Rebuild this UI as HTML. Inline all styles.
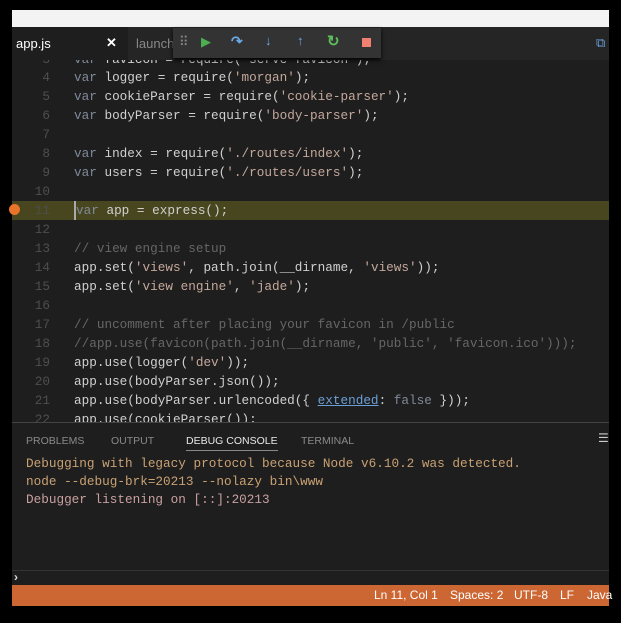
<!DOCTYPE html>
<html><head><style>
body{margin:0;width:621px;height:623px;background:#000;position:relative;overflow:hidden;font-family:"Liberation Sans",sans-serif}
.top{position:absolute;left:12px;top:10px;width:597px;height:17px;background:#f3f3f3}
.tabs{position:absolute;left:12px;top:27px;width:597px;height:33px;background:#252526}
.tab1{position:absolute;left:0;top:0;width:116px;height:33px;background:#1e1e1e;color:#fff;font-size:13px}
.ed{position:absolute;left:12px;top:60px;width:597px;height:362px;background:#1e1e1e;overflow:hidden}
.ln{position:absolute;left:0;width:597px;height:19px;font-family:"Liberation Mono",monospace;font-size:12.7px;line-height:19px;color:#d0d0d0;white-space:pre}
.ln .n{position:absolute;left:14px;width:24px;text-align:right;color:#4e4e4e}
.ln .c{position:absolute;left:62px}
.k{color:#7f8a99}.s{color:#c4a89c}.cm{color:#666}.lk{color:#6a9fd8;text-decoration:underline}
.hl{background:#48461f}
.dbg{position:absolute;left:173px;top:28px;width:208px;height:30px;background:#333333;box-shadow:0 2px 4px #000}
.panel{position:absolute;left:12px;top:422px;width:597px;height:148px;background:#1e1e1e;border-top:1px solid #444}
.pt{position:absolute;top:12px;font-size:10.5px;color:#8a8a8a}
.out{position:absolute;left:14px;font-family:"Liberation Mono",monospace;font-size:12.7px;line-height:18px;color:#c9a173;white-space:pre}
.inp{position:absolute;left:12px;top:570px;width:597px;height:15px;background:#1e1e1e;border-top:1px solid #333;color:#ddd;font-size:12px}
.sb{position:absolute;left:12px;top:585px;width:597px;height:21px;background:#cc6633;color:#fff;font-size:12px;line-height:21px}
</style></head><body>
<div class="top"></div>
<div class="tabs">
 <div class="tab1"><span style="position:absolute;left:4px;top:9px">app.js</span><span style="position:absolute;left:94px;top:8px;font-weight:bold">✕</span></div>
 <span style="position:absolute;left:124px;top:9px;color:#888;font-size:13px">launch</span>
 <span style="position:absolute;left:584px;top:8px;color:#6a9fd8;font-size:13px">⧉</span>
</div>
<div class="ed">
 <div class="ln" style="top:-10px"><span class="n">3</span><span class="c"><span class="k">var</span> favicon = require('serve-favicon');</span></div>
 <div class="ln" style="top:8px"><span class="n">4</span><span class="c"><span class="k">var</span> logger = require(<span class="s">'morgan'</span>);</span></div>
 <div class="ln" style="top:27px"><span class="n">5</span><span class="c"><span class="k">var</span> cookieParser = require(<span class="s">'cookie-parser'</span>);</span></div>
 <div class="ln" style="top:46px"><span class="n">6</span><span class="c"><span class="k">var</span> bodyParser = require(<span class="s">'body-parser'</span>);</span></div>
 <div class="ln" style="top:65px"><span class="n">7</span></div>
 <div class="ln" style="top:84px"><span class="n">8</span><span class="c"><span class="k">var</span> index = require(<span class="s">'./routes/index'</span>);</span></div>
 <div class="ln" style="top:103px"><span class="n">9</span><span class="c"><span class="k">var</span> users = require(<span class="s">'./routes/users'</span>);</span></div>
 <div class="ln" style="top:122px"><span class="n">10</span></div>
 <div class="ln hl" style="top:141px"><span class="n">11</span><span class="c" style="border-left:2px solid #aaa"><span class="k">var</span> app = express();</span></div>
 <div class="ln" style="top:160px"><span class="n">12</span></div>
 <div class="ln" style="top:179px"><span class="n">13</span><span class="c cm">// view engine setup</span></div>
 <div class="ln" style="top:198px"><span class="n">14</span><span class="c">app.set(<span class="s">'views'</span>, path.join(__dirname, <span class="s">'views'</span>));</span></div>
 <div class="ln" style="top:217px"><span class="n">15</span><span class="c">app.set(<span class="s">'view engine'</span>, <span class="s">'jade'</span>);</span></div>
 <div class="ln" style="top:236px"><span class="n">16</span></div>
 <div class="ln" style="top:255px"><span class="n">17</span><span class="c cm">// uncomment after placing your favicon in /public</span></div>
 <div class="ln" style="top:274px"><span class="n">18</span><span class="c cm">//app.use(favicon(path.join(__dirname, 'public', 'favicon.ico')));</span></div>
 <div class="ln" style="top:293px"><span class="n">19</span><span class="c">app.use(logger(<span class="s">'dev'</span>));</span></div>
 <div class="ln" style="top:312px"><span class="n">20</span><span class="c">app.use(bodyParser.json());</span></div>
 <div class="ln" style="top:331px"><span class="n">21</span><span class="c">app.use(bodyParser.urlencoded({ <span class="lk">extended</span>: <span class="k">false</span> }));</span></div>
 <div class="ln" style="top:350px"><span class="n">22</span><span class="c">app.use(cookieParser());</span></div>
</div>
<div style="position:absolute;left:9px;top:204px;width:11px;height:11px;border-radius:50%;background:#e8742a"></div>
<div class="dbg">
 <span style="position:absolute;left:6px;top:6px;color:#888;font-size:13px">⠿</span>
 <span style="position:absolute;left:28px;top:6px;color:#4caf50;font-size:13px">▶</span>
 <span style="position:absolute;left:58px;top:5px;color:#6aa8e8;font-size:14px;font-weight:bold">↷</span>
 <span style="position:absolute;left:92px;top:5px;color:#6aa8e8;font-size:13px;font-weight:bold">↓</span>
 <span style="position:absolute;left:124px;top:5px;color:#6aa8e8;font-size:13px;font-weight:bold">↑</span>
 <span style="position:absolute;left:154px;top:4px;color:#5bbf5b;font-size:15px;font-weight:bold">↻</span>
 <div style="position:absolute;left:189px;top:10px;width:9px;height:9px;background:#f08070"></div>
</div>
<div class="panel">
 <span class="pt" style="left:14px">PROBLEMS</span>
 <span class="pt" style="left:99px">OUTPUT</span>
 <span class="pt" style="left:174px;color:#e8e8e8;border-bottom:1px solid #888;padding-bottom:3px">DEBUG CONSOLE</span>
 <span class="pt" style="left:289px">TERMINAL</span>
 <span style="position:absolute;left:586px;top:8px;color:#ccc;font-size:12px">☰</span>
 <div class="out" style="top:32px">Debugging with legacy protocol because Node v6.10.2 was detected.</div>
 <div class="out" style="top:50px">node --debug-brk=20213 --nolazy bin\www</div>
 <div class="out" style="top:68px;color:#c9a0a0">Debugger listening on [::]:20213</div>
</div>
<div class="inp"><span style="position:absolute;left:2px;top:-1px;font-weight:bold">›</span></div>
<div class="sb">
 <span style="position:absolute;left:362px">Ln 11, Col 1</span>
 <span style="position:absolute;left:438px">Spaces: 2</span>
 <span style="position:absolute;left:502px">UTF-8</span>
 <span style="position:absolute;left:548px">LF</span>
 <span style="position:absolute;left:575px">Java</span>
</div>
</body></html>
